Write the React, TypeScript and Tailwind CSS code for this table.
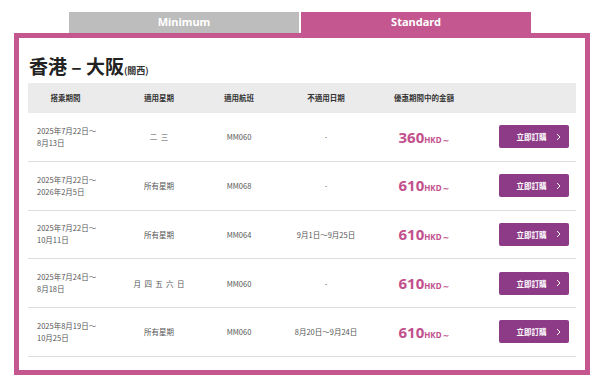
const rows = [
  { from: '2025年7月22日～', to: '8月13日', days: '二 三', flight: 'MM060', except: '-', price: '360' },
  { from: '2025年7月22日～', to: '2026年2月5日', days: '所有星期', flight: 'MM068', except: '-', price: '610' },
  { from: '2025年7月22日～', to: '10月11日', days: '所有星期', flight: 'MM064', except: '9月1日～9月25日', price: '610' },
  { from: '2025年7月24日～', to: '8月18日', days: '月 四 五 六 日', flight: 'MM060', except: '-', price: '610' },
  { from: '2025年8月19日～', to: '10月25日', days: '所有星期', flight: 'MM060', except: '8月20日～9月24日', price: '610' },
];

const cols = 'grid grid-cols-[75px_112px_48px_126px_70px_1fr] items-center';

export default function App() {
  return (
    <div className="w-[600px] h-[384px] bg-white pt-[12px] font-['Noto_Sans_CJK_TC','Noto_Sans',sans-serif]">
      <div className="flex justify-center gap-[2px]">
        <div className="w-[230px] h-[21px] bg-[#bdbdbd] flex items-center justify-center text-white text-[11px] font-bold font-['Noto_Sans',sans-serif]">
          Minimum
        </div>
        <div className="w-[230px] h-[21px] bg-[#c4578f] flex items-center justify-center text-white text-[11px] font-bold font-['Noto_Sans',sans-serif]">
          Standard
        </div>
      </div>

      <div className="mx-[14px] w-[576px] h-[342px] border-[5px] border-[#c4578f] pt-[15px] px-[9px]">
        <h1 className="h-[26px] leading-[26px] text-[19px] font-bold text-[#222] pl-[1px]">
          香港 – 大阪<span className="text-[9px] leading-none font-bold text-[#333]">(關西)</span>
        </h1>

        <div className={`${cols} mt-[4px] h-[30px] bg-[#ebebeb] text-[7.5px] font-bold text-[#333]`}>
          <span className="text-center">搭乘期間</span>
          <span className="text-center">適用星期</span>
          <span className="text-center">適用航班</span>
          <span className="text-center">不適用日期</span>
          <span className="text-center">優惠期間中的金額</span>
          <span />
        </div>

        {rows.map((r, i) => (
          <div key={i} className={`${cols} h-[48.75px] border-b border-[#dedede] text-[7.5px] text-[#555]`}>
            <div className="pl-[9px] leading-[12px]">
              <div>{r.from}</div>
              <div>{r.to}</div>
            </div>
            <span className="text-center whitespace-pre">{r.days.split(' ').join('  ')}</span>
            <span className="text-center">{r.flight}</span>
            <span className="text-center">{r.except}</span>
            <span className="text-center text-[#c2508d] font-bold font-['Noto_Sans',sans-serif]">
              <span className="text-[15px]">{r.price}</span>
              <span className="text-[8px]">HKD～</span>
            </span>
            <div className="flex justify-end pr-[7px]">
              <button className="w-[70px] h-[23px] bg-[#8d3a87] rounded-[2px] flex items-center text-white text-[7.5px] font-bold">
                <span className="flex-1 text-center pl-[8px]">立即訂購</span>
                <svg width="5" height="8" viewBox="0 0 5 8" className="mr-[8px]">
                  <path d="M1 1l3 3-3 3" fill="none" stroke="white" strokeWidth="1" />
                </svg>
              </button>
            </div>
          </div>
        ))}
      </div>
    </div>
  );
}
